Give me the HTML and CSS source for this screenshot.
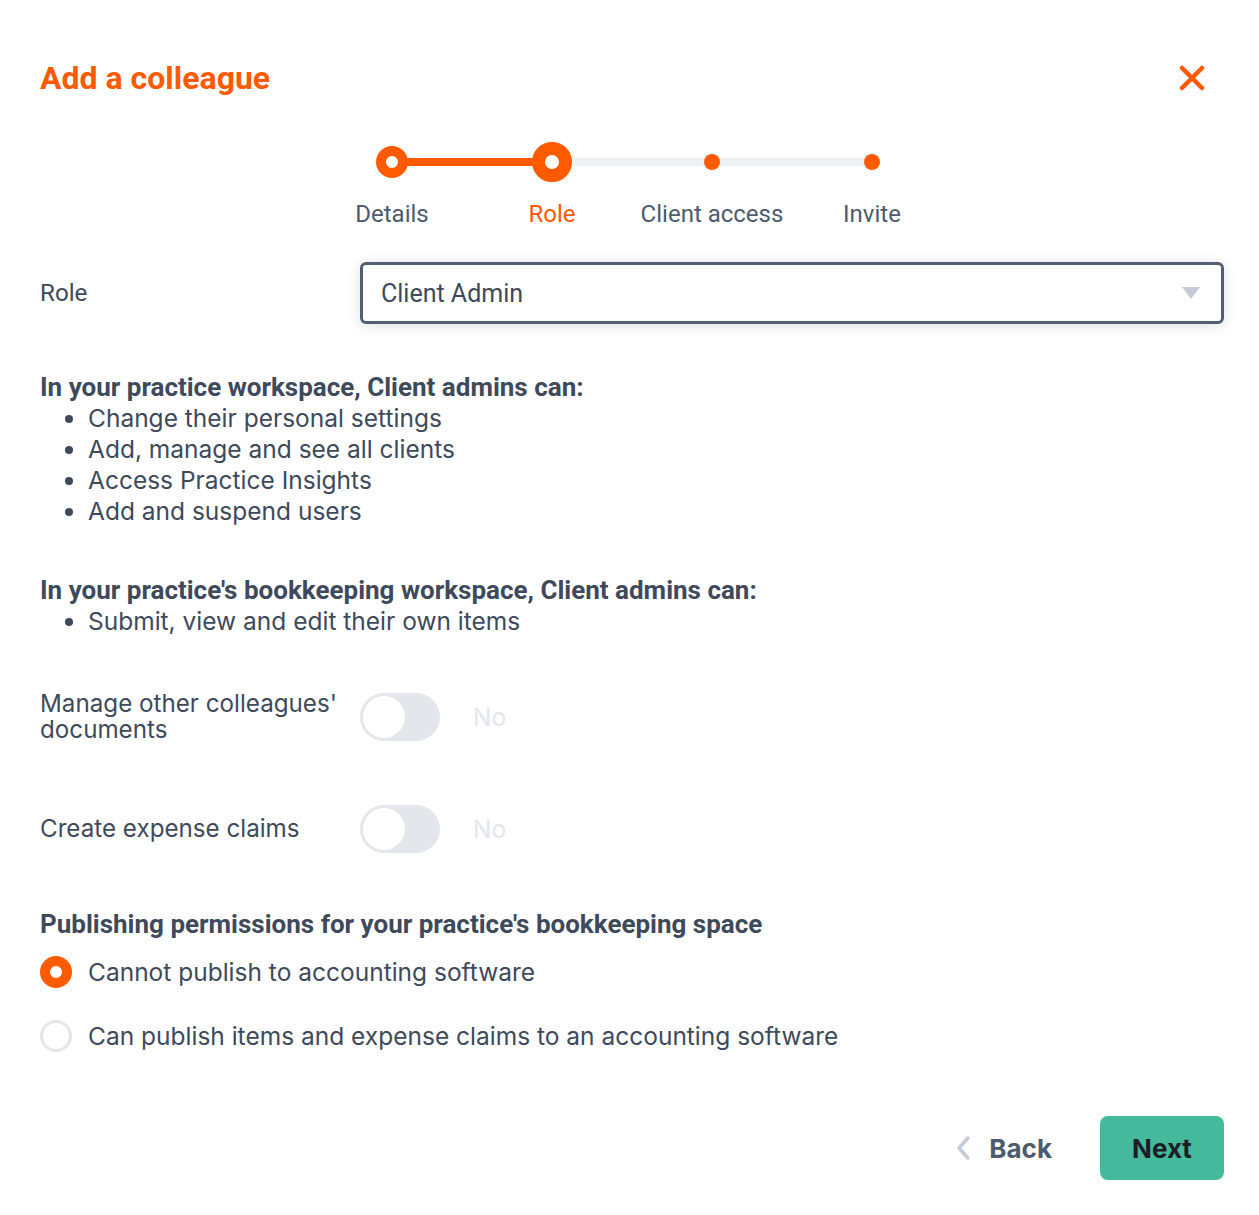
FILE: index.html
```html
<!DOCTYPE html>
<html lang="en">
<head>
  <meta charset="UTF-8">
  <title>Add a colleague</title>
  <link rel="stylesheet" href="styles.css">
</head>
<body>

  <div class="dialog">
    <div class="header">
      <h1>Add a colleague</h1>
      <button class="close" aria-label="Close">
        <svg width="26" height="26" viewBox="0 0 26 26">
          <path d="M3 3 L23 23 M23 3 L3 23" stroke="#ff5a00" stroke-width="4.5" stroke-linecap="round"/>
        </svg>
      </button>
    </div>

    <div class="stepper">
      <div class="track">
        <div class="track-done"></div>
      </div>
      <div class="step">
        <span class="dot done"></span>
        <span class="step-label">Details</span>
      </div>
      <div class="step">
        <span class="dot current"></span>
        <span class="step-label active">Role</span>
      </div>
      <div class="step">
        <span class="dot todo"></span>
        <span class="step-label">Client access</span>
      </div>
      <div class="step">
        <span class="dot todo"></span>
        <span class="step-label">Invite</span>
      </div>
    </div>

    <div class="row role-row">
      <label class="row-label">Role</label>
      <div class="select">
        <span>Client Admin</span>
        <svg width="20" height="14" viewBox="0 0 20 14"><path d="M1 1 H19 L10 13 Z" fill="#c5cbd6"/></svg>
      </div>
    </div>

    <div class="perms">
      <h3>In your practice workspace, Client admins can:</h3>
      <ul>
        <li>Change their personal settings</li>
        <li>Add, manage and see all clients</li>
        <li>Access Practice Insights</li>
        <li>Add and suspend users</li>
      </ul>
    </div>

    <div class="perms">
      <h3>In your practice's bookkeeping workspace, Client admins can:</h3>
      <ul>
        <li>Submit, view and edit their own items</li>
      </ul>
    </div>

    <div class="row toggle-row first">
      <label class="row-label">Manage other colleagues' documents</label>
      <div class="toggle"><span class="knob"></span></div>
      <span class="toggle-text">No</span>
    </div>

    <div class="row toggle-row">
      <label class="row-label">Create expense claims</label>
      <div class="toggle"><span class="knob"></span></div>
      <span class="toggle-text">No</span>
    </div>

    <div class="publishing">
      <h3>Publishing permissions for your practice's bookkeeping space</h3>
      <div class="radio-option">
        <span class="radio checked"></span>
        <span>Cannot publish to accounting software</span>
      </div>
      <div class="radio-option">
        <span class="radio"></span>
        <span>Can publish items and expense claims to an accounting software</span>
      </div>
    </div>

    <div class="footer">
      <button class="back">
        <svg width="16" height="26" viewBox="0 0 16 26"><path d="M13 3 L4 13 L13 23" stroke="#c5cbd6" stroke-width="3.5" fill="none" stroke-linecap="round" stroke-linejoin="round"/></svg>
        <span>Back</span>
      </button>
      <button class="next">Next</button>
    </div>
  </div>

</body>
</html>
```

FILE: styles.css
```css
body {
  margin: 0;
  background: #ffffff;
  font-family: Inter, "Liberation Sans", sans-serif;
  color: #3e4a5b;
}

.dialog {
  width: 1184px;
  padding: 56px 35px 0 40px;
}

.header {
  display: flex;
  justify-content: space-between;
  align-items: center;
  height: 44px;
}

h1 {
  margin: 0;
  font-family: Roboto, sans-serif;
  font-weight: 700;
  font-size: 32px;
  color: #ff5a00;
}

.close {
  background: none;
  border: none;
  padding: 0;
  margin-right: 19px;
  cursor: pointer;
  display: flex;
}

.stepper {
  position: relative;
  display: flex;
  justify-content: center;
  margin-top: 40px;
}

.track {
  position: absolute;
  left: 352px;
  width: 480px;
  top: 18px;
  height: 8px;
  background: #eff0f4;
}

.track-done {
  width: 160px;
  height: 8px;
  background: #ff5a00;
}

.step {
  position: relative;
  width: 160px;
  display: flex;
  flex-direction: column;
  align-items: center;
}

.dot {
  height: 44px;
  display: flex;
  align-items: center;
  justify-content: center;
}

.dot::after {
  content: "";
  display: block;
  border-radius: 50%;
  background: #ff5a00;
}

.dot.done::after {
  width: 12px;
  height: 12px;
  background: #ffffff;
  border: 10px solid #ff5a00;
}

.dot.current::after {
  width: 14px;
  height: 14px;
  background: #ffffff;
  border: 13px solid #ff5a00;
}

.dot.todo::after {
  width: 16px;
  height: 16px;
}

.step-label {
  margin-top: 16px;
  font-family: Roboto, sans-serif;
  font-size: 24px;
  color: #4d5b6e;
  white-space: nowrap;
}

.step-label.active {
  color: #ff5a00;
}

.row {
  display: flex;
  align-items: center;
}

.row-label {
  width: 320px;
  font-size: 24.2px;
  line-height: 26px;
  color: #3e4a5b;
}

.role-row {
  margin-top: 34px;
}

.role-row .row-label {
  font-family: Roboto, sans-serif;
}

.select {
  flex: 1;
  height: 56px;
  border: 3px solid #525f70;
  border-radius: 6px;
  box-shadow: 0 2px 14px rgba(0, 0, 0, 0.12);
  display: flex;
  align-items: center;
  justify-content: space-between;
  padding: 0 20px 0 18px;
  font-family: Roboto, sans-serif;
  font-size: 25px;
  color: #3e4a5b;
}

.perms {
  margin-top: 48px;
}

h3 {
  margin: 0;
  font-family: Roboto, sans-serif;
  font-weight: 700;
  font-size: 26px;
  line-height: 31px;
  color: #3e4a5b;
}

ul {
  margin: 0;
  padding-left: 48px;
}

li {
  font-size: 24.5px;
  line-height: 31px;
}

.toggle-row {
  height: 48px;
}

.toggle-row.first {
  margin-top: 56px;
}

.toggle-row + .toggle-row {
  margin-top: 64px;
}

.toggle {
  width: 80px;
  height: 48px;
  border-radius: 24px;
  background: #e3e6eb;
  position: relative;
}

.knob {
  position: absolute;
  left: 3px;
  top: 3px;
  width: 42px;
  height: 42px;
  border-radius: 50%;
  background: #ffffff;
}

.toggle-text {
  margin-left: 33px;
  font-size: 24.5px;
  color: #e3e6eb;
}

.publishing {
  margin-top: 56px;
}

.radio-option {
  display: flex;
  align-items: center;
  gap: 16px;
  font-size: 24.5px;
  height: 40px;
  margin-top: 12px;
}

.radio-option + .radio-option {
  margin-top: 24px;
}

.radio {
  width: 26px;
  height: 26px;
  border-radius: 50%;
  border: 3px solid #e3e6eb;
  background: #ffffff;
}

.radio.checked {
  width: 12px;
  height: 12px;
  border: 10px solid #ff5a00;
}

.footer {
  display: flex;
  justify-content: flex-end;
  align-items: center;
  margin-top: 60px;
}

.back {
  display: flex;
  align-items: center;
  gap: 18px;
  background: none;
  border: none;
  font-family: Inter, sans-serif;
  font-weight: 700;
  font-size: 26px;
  color: #4d5b6e;
  padding: 0;
  cursor: pointer;
}

.next {
  margin-left: 48px;
  width: 124px;
  height: 64px;
  border: none;
  border-radius: 8px;
  background: #44b99c;
  color: #1b1e22;
  font-family: Inter, sans-serif;
  font-weight: 700;
  font-size: 26px;
  cursor: pointer;
}
```
